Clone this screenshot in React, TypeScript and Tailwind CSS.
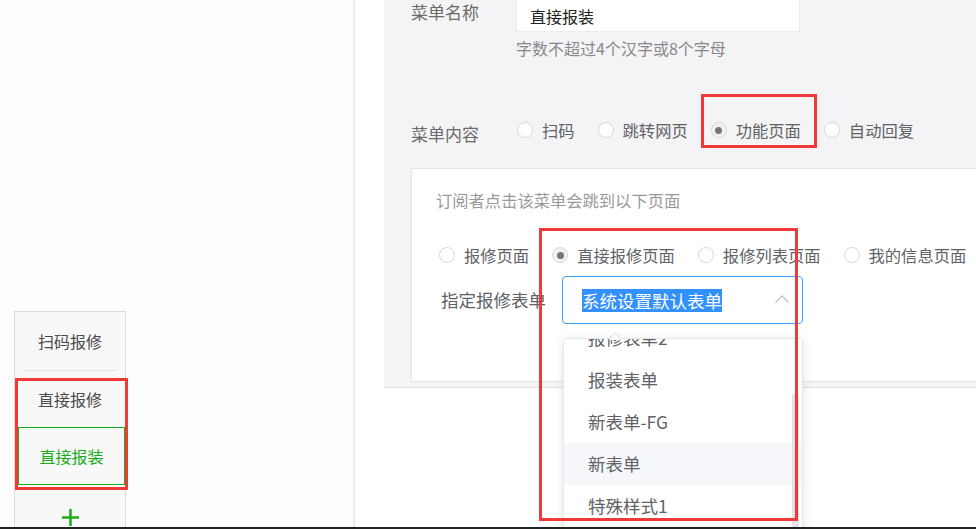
import React from "react";

const FONT = "font-['Noto_Sans_CJK_SC','Noto_Sans',sans-serif]";

function Radio({ label, checked }: { label: string; checked?: boolean }) {
  return (
    <div className="flex items-center gap-[9px]">
      <span
        className={`flex h-[16px] w-[16px] items-center justify-center rounded-full border border-[#d6d8dc] ${
          checked ? "bg-[#f1f1f1]" : "bg-white"
        }`}
      >
        {checked && <span className="h-[7px] w-[7px] rounded-full bg-[#767676]" />}
      </span>
      <span className="text-[16.3px] leading-[24px] text-[#606266]">{label}</span>
    </div>
  );
}

function MenuPreview() {
  return (
    <div className="w-[112px] border border-[#dcdcdc] bg-[#f8f8f8] text-[16px]">
      <div className="flex h-[58px] items-center justify-center text-[#4a4a4a]">扫码报修</div>
      <div className="mx-[8px] h-px bg-[#e3e3e3]" />
      <div className="flex h-[56px] items-center justify-center text-[#4a4a4a]">直接报修</div>
      <div className="ml-[3px] flex h-[58px] items-center justify-center border border-[#1aad19] text-[#1aad19]">
        直接报装
      </div>
      <div className="flex h-[64px] items-center justify-center">
        <svg width="17" height="17" viewBox="0 0 17 17">
          <path d="M8.5 0v17M0 8.5h17" stroke="#1aad19" strokeWidth="2.5" />
        </svg>
      </div>
    </div>
  );
}

const options = ["报修表单2", "报装表单", "新表单-FG", "新表单", "特殊样式1", "测试表单"];

function FormSelect() {
  return (
    <div className="relative flex h-[48px] w-[241px] items-center rounded-[4px] border border-[#409eff] bg-white pl-[19px]">
      <span className="bg-[#3390ff] text-[17.5px] leading-[23px] text-white">系统设置默认表单</span>
      <svg
        className="absolute right-[12px] top-[17px]"
        width="16"
        height="10"
        viewBox="0 0 16 10"
        fill="none"
      >
        <path d="M1.5 8.5L8 2l6.5 6.5" stroke="#c0c4cc" strokeWidth="1.3" />
      </svg>

      {/* popper arrow */}
      <div className="absolute left-[45px] top-[55px] z-20 h-0 w-0 border-x-[7px] border-b-[7px] border-x-transparent border-b-[#e4e7ed]" />
      <div className="absolute left-[46px] top-[56.5px] z-20 h-0 w-0 border-x-[6px] border-b-[6px] border-x-transparent border-b-white" />

      <div className="absolute left-0 top-[61px] z-10 h-[200px] w-[240px] overflow-hidden rounded-[4px] border border-[#e4e7ed] bg-white shadow-[0_2px_12px_rgba(0,0,0,0.1)]">
        <div className="-mt-[22px]">
          {options.map((o) => (
            <div
              key={o}
              className={`flex h-[42px] items-center pl-[24px] text-[17.5px] text-[#606266] ${
                o === "新表单" ? "bg-[#f5f7fa]" : ""
              }`}
            >
              {o}
            </div>
          ))}
        </div>
        <div className="absolute right-[3px] top-[54px] h-[150px] w-[7px] rounded-full bg-[#e4e4e6]" />
      </div>
    </div>
  );
}

export default function App() {
  return (
    <div className={`relative flex h-[529px] w-[976px] overflow-hidden bg-white ${FONT}`}>
      <div className="w-[353px] shrink-0 bg-[#fdfdfd] pl-[14px] pt-[311px]">
        <MenuPreview />
      </div>
      <div className="w-[2px] shrink-0 bg-[#ebebeb]" />

      <div className="shrink-0 pl-[29px]">
        <div className="h-[388px] w-[640px] border-b border-[#e2e2e4] bg-[#f4f4f6] pl-[27px]">
          <div className="flex">
            <div className="w-[105px] text-[17px] leading-[24px] text-[#6b6b6b]">菜单名称</div>
            <div className="flex h-[32px] w-[284px] items-center border border-t-0 border-[#ececec] bg-white pl-[13px] text-[16px] text-[#222]">
              直接报装
            </div>
          </div>
          <div className="ml-[105px] mt-[5px] text-[16px] leading-[22px] text-[#888]">
            字数不超过4个汉字或8个字母
          </div>

          <div className="mt-[59px] flex items-start">
            <div className="mt-[4px] w-[106px] text-[17px] leading-[24px] text-[#6b6b6b]">菜单内容</div>
            <div className="flex h-[24px] items-center gap-[23px]">
              <Radio label="扫码" />
              <Radio label="跳转网页" />
              <Radio label="功能页面" checked />
              <Radio label="自动回复" />
            </div>
          </div>

          <div className="mt-[22px] h-[214px] w-[600px] border border-[#e6e6e8] bg-white pl-[24px] pt-[20px]">
            <div className="text-[16.3px] leading-[22px] text-[#999]">订阅者点击该菜单会跳到以下页面</div>
            <div className="mt-[32px] flex h-[24px] items-center gap-[23px] pl-[3px]">
              <Radio label="报修页面" />
              <Radio label="直接报修页面" checked />
              <Radio label="报修列表页面" />
              <Radio label="我的信息页面" />
            </div>
            <div className="mt-[9px] flex items-center pl-[5px]">
              <div className="w-[121px] text-[17.5px] leading-[48px] text-[#606266]">指定报修表单</div>
              <FormSelect />
            </div>
          </div>
        </div>
      </div>

      {/* red annotation boxes */}
      <div className="absolute left-[701px] top-[94px] z-30 h-[54px] w-[116px] border-[3px] border-[#f03a3a]" />
      <div className="absolute left-[539px] top-[228px] z-30 h-[293px] w-[259px] border-[3px] border-[#f03a3a]" />
      <div className="absolute left-[15px] top-[378px] z-30 h-[112px] w-[113px] border-[3px] border-[#f03a3a]" />

      <div className="absolute bottom-0 left-0 right-0 z-40 h-[2px] bg-[#222]" />
    </div>
  );
}
